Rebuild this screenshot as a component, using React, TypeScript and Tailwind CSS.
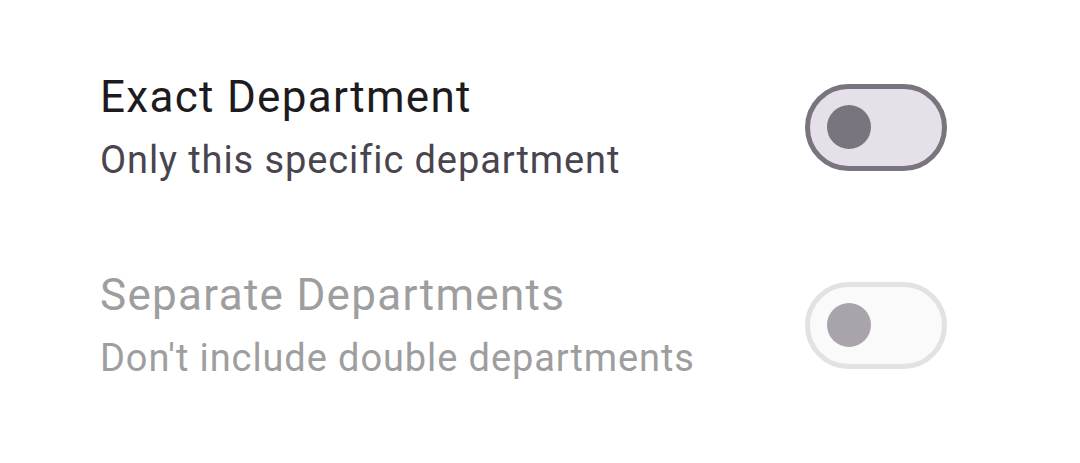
import React from "react";

function Switch({ disabled }: { disabled?: boolean }) {
  return (
    <div
      className={
        "flex h-[87px] w-[142px] shrink-0 items-center rounded-full border-[5px] pl-[17px] " +
        (disabled ? "border-[#e2e2e2] bg-[#fafafa]" : "border-[#79747e] bg-[#e6e0e9]")
      }
    >
      <div
        className={
          "h-[44px] w-[44px] rounded-full " + (disabled ? "bg-[#a9a4ab]" : "bg-[#79747e]")
        }
      />
    </div>
  );
}

function Row({ title, sub, disabled }: { title: string; sub: string; disabled?: boolean }) {
  return (
    <div className="flex items-center justify-between">
      <div className="flex flex-col">
        <div
          className={
            "text-[44px] leading-[64px] tracking-[1.3px] " +
            (disabled ? "text-[#9e9e9e]" : "text-[#1d1b20]")
          }
        >
          {title}
        </div>
        <div
          className={
            "mt-[2px] text-[38px] leading-[58px] tracking-[0.9px] " +
            (disabled ? "text-[#9e9e9e]" : "text-[#49454f]")
          }
        >
          {sub}
        </div>
      </div>
      <Switch disabled={disabled} />
    </div>
  );
}

export default function App() {
  return (
    <div
      className="flex h-[463px] w-[1080px] flex-col gap-[74px] bg-white pl-[100px] pr-[133px] pt-[65px]"
      style={{ fontFamily: "Roboto, 'Liberation Sans', sans-serif" }}
    >
      <Row title="Exact Department" sub="Only this specific department" />
      <Row title="Separate Departments" sub="Don't include double departments" disabled />
    </div>
  );
}
